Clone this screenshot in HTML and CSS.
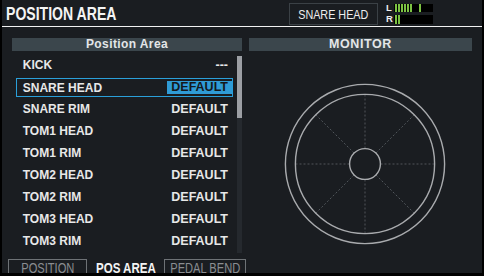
FILE: index.html
```html
<!DOCTYPE html>
<html>
<head>
<meta charset="utf-8">
<link rel="stylesheet" href="styles.css">
</head>
<body>
<div class="screen">
  <div class="topbar">
    <div class="title"><span>POSITION AREA</span></div>
    <div class="instbox"><span>SNARE HEAD</span></div>
    <div class="meter">
      <div class="mrow"><span class="mlabel">L</span><div class="mbar"><i></i><i></i><i></i><i></i><i></i><i></i><i class="peak"></i></div></div>
      <div class="mrow"><span class="mlabel">R</span><div class="mbar"><i></i><i></i></div></div>
    </div>
  </div>
  <div class="main">
    <div class="leftcol">
      <div class="barhead">Position Area</div>
      <div class="listwrap">
        <div class="list">
          <div class="row"><span class="name">KICK</span><span class="val">---</span></div>
          <div class="row sel"><span class="name">SNARE HEAD</span><span class="val">DEFAULT</span></div>
          <div class="row"><span class="name">SNARE RIM</span><span class="val">DEFAULT</span></div>
          <div class="row"><span class="name">TOM1 HEAD</span><span class="val">DEFAULT</span></div>
          <div class="row"><span class="name">TOM1 RIM</span><span class="val">DEFAULT</span></div>
          <div class="row"><span class="name">TOM2 HEAD</span><span class="val">DEFAULT</span></div>
          <div class="row"><span class="name">TOM2 RIM</span><span class="val">DEFAULT</span></div>
          <div class="row"><span class="name">TOM3 HEAD</span><span class="val">DEFAULT</span></div>
          <div class="row"><span class="name">TOM3 RIM</span><span class="val">DEFAULT</span></div>
        </div>
        <div class="scroll"><div class="thumb"></div></div>
      </div>
    </div>
    <div class="rightcol">
      <div class="barhead mon">MONITOR</div>
      <svg class="pad" width="223" height="202" viewBox="0 0 223 202">
        <g stroke="#50555a" stroke-width="1" stroke-dasharray="2 2" fill="none">
          <line x1="116" y1="97.5" x2="116" y2="43"/>
          <line x1="116" y1="128.5" x2="116" y2="183"/>
          <line x1="100.5" y1="113" x2="46" y2="113"/>
          <line x1="131.5" y1="113" x2="186" y2="113"/>
          <line x1="105" y1="102" x2="66.5" y2="63.5"/>
          <line x1="127" y1="102" x2="165.5" y2="63.5"/>
          <line x1="105" y1="124" x2="66.5" y2="162.5"/>
          <line x1="127" y1="124" x2="165.5" y2="162.5"/>
        </g>
        <g stroke="#a9abae" stroke-width="1.4" fill="none">
          <circle cx="116" cy="113" r="79.6"/>
          <circle cx="116" cy="113" r="69.6"/>
          <circle cx="116" cy="113" r="15.4"/>
        </g>
      </svg>
    </div>
  </div>
  <div class="tabs">
    <div class="tab off t1"><span>POSITION</span></div>
    <div class="tab on"><span>POS AREA</span></div>
    <div class="tab off t3"><span>PEDAL BEND</span></div>
  </div>
</div>
</body>
</html>
```

FILE: styles.css
```css
html, body {
  margin: 0;
  padding: 0;
  background: #000;
}
body {
  width: 484px;
  height: 276px;
  overflow: hidden;
  font-family: "Liberation Sans", Arial, sans-serif;
}
.screen {
  margin: 0 2px;
  width: 480px;
  height: 273px;
  background: #1a1d21;
  display: flex;
  flex-direction: column;
  overflow: hidden;
}
.topbar {
  height: 26px;
  border-bottom: 1px solid #f2f2f2;
  display: flex;
  align-items: flex-start;
  flex-shrink: 0;
}
.title {
  margin-left: 4px;
  margin-top: 4px;
  width: 120px;
  height: 20px;
  color: #f4f4f4;
  font-weight: bold;
  font-size: 18.5px;
  line-height: 20px;
  white-space: nowrap;
}
.title span {
  display: inline-block;
  transform: scaleX(0.76);
  transform-origin: left center;
}
.instbox {
  margin-left: auto;
  margin-top: 3px;
  width: 87px;
  height: 20px;
  border: 1px solid #3b4146;
  display: flex;
  align-items: center;
  justify-content: center;
  color: #eeeeee;
  font-size: 13px;
  white-space: nowrap;
}
.instbox span {
  display: inline-block;
  transform: scaleX(0.83);
}
.meter {
  margin-left: 8px;
  margin-right: 49px;
  margin-top: 4px;
  display: flex;
  flex-direction: column;
  gap: 3px;
}
.mrow {
  display: flex;
  align-items: stretch;
  height: 8px;
}
.mrow + .mrow {
  height: 9px;
}
.mlabel {
  width: 8px;
  color: #eeeeee;
  font-size: 9.5px;
  font-weight: bold;
  line-height: 8px;
}
.mbar {
  width: 38px;
  background: #000;
  display: flex;
  padding-left: 1px;
  gap: 1px;
}
.mbar i {
  display: block;
  width: 2px;
  background: #7cc243;
}
.mbar i.peak {
  margin-left: 6px;
}
.main {
  height: 232px;
  padding-top: 11px;
  box-sizing: border-box;
  display: flex;
  flex-shrink: 0;
}
.leftcol {
  margin-left: 10px;
  width: 230px;
  display: flex;
  flex-direction: column;
}
.rightcol {
  margin-left: 7px;
  width: 223px;
  display: flex;
  flex-direction: column;
}
.barhead {
  height: 13px;
  background: #3b464c;
  color: #e4e6e8;
  font-size: 12px;
  font-weight: bold;
  letter-spacing: 0.4px;
  line-height: 13px;
  text-align: center;
}
.barhead.mon {
  font-size: 12.5px;
  letter-spacing: 0.6px;
}
.listwrap {
  display: flex;
}
.list {
  margin-left: 4px;
  margin-top: 3px;
  width: 217px;
}
.row {
  height: 22px;
  box-sizing: border-box;
  border: 1px solid transparent;
  display: flex;
  align-items: center;
  justify-content: space-between;
  color: #e8e8e8;
  font-size: 12.5px;
  font-weight: bold;
  white-space: nowrap;
}
.row span {
  display: inline-block;
}
.row.sel {
  height: 19px;
  margin-top: 2px;
  margin-bottom: 1px;
  border-color: #2a9fd9;
}
.name {
  padding-left: 6px;
  transform: scaleX(0.96);
  transform-origin: left center;
}
.val {
  padding: 0 4px;
  height: 13px;
  line-height: 13px;
}
.row.sel .val {
  background: #2f9bd6;
  color: #14181c;
}
.scroll {
  margin-left: 4px;
  margin-top: 5px;
  width: 5px;
  height: 197px;
  background: #25292e;
}
.thumb {
  height: 62px;
  background: #9c9fa4;
}
.pad {
  display: block;
}
.tabs {
  height: 14px;
  display: flex;
  align-items: flex-start;
  padding-left: 6px;
  flex-shrink: 0;
}
.tab {
  height: 20px;
  box-sizing: border-box;
  display: flex;
  justify-content: center;
  font-size: 15px;
  line-height: 13px;
  padding-top: 1px;
  white-space: nowrap;
}
.tab span {
  display: inline-block;
}
.tab.off {
  border: 1px solid #6e7276;
  color: #8a8d91;
}
.tab.off span {
  transform: scaleX(0.74);
}
.t1 { width: 79px; }
.t3 { width: 82px; }
.tab.on {
  width: 77px;
  color: #f4f4f4;
  font-weight: bold;
  padding-top: 2px;
}
.tab.on span {
  transform: scaleX(0.77);
}
```
